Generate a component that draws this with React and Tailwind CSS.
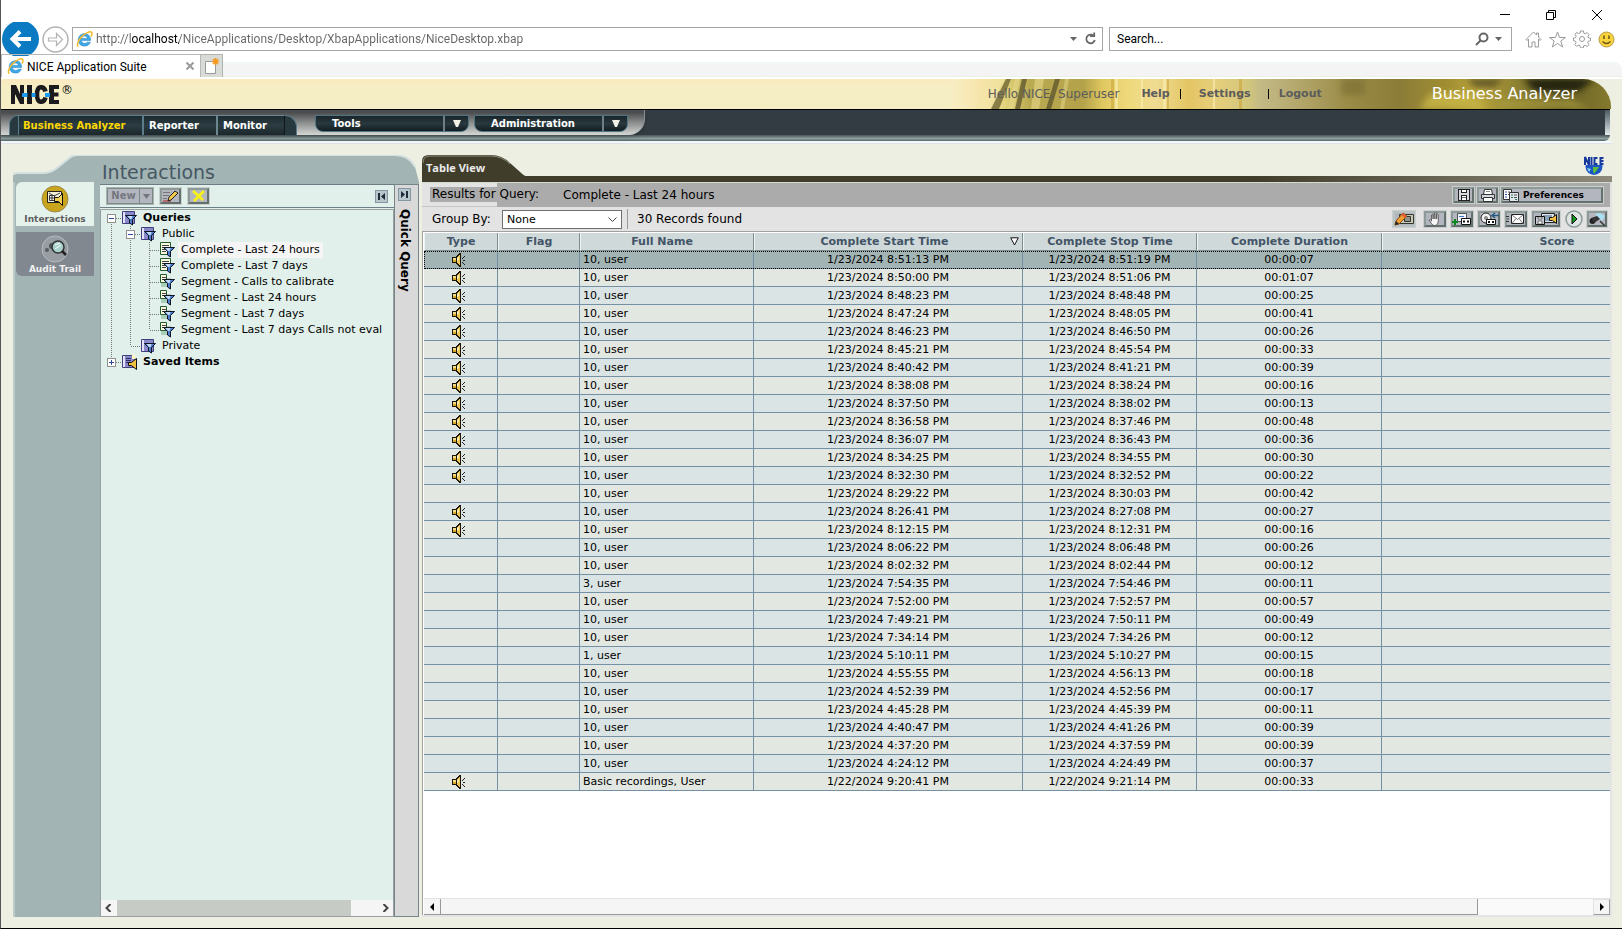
import React, { useState } from "react";

const records = [
  [1, "10, user", "1/23/2024 8:51:13 PM", "1/23/2024 8:51:19 PM", "00:00:07"],
  [1, "10, user", "1/23/2024 8:50:00 PM", "1/23/2024 8:51:06 PM", "00:01:07"],
  [1, "10, user", "1/23/2024 8:48:23 PM", "1/23/2024 8:48:48 PM", "00:00:25"],
  [1, "10, user", "1/23/2024 8:47:24 PM", "1/23/2024 8:48:05 PM", "00:00:41"],
  [1, "10, user", "1/23/2024 8:46:23 PM", "1/23/2024 8:46:50 PM", "00:00:26"],
  [1, "10, user", "1/23/2024 8:45:21 PM", "1/23/2024 8:45:54 PM", "00:00:33"],
  [1, "10, user", "1/23/2024 8:40:42 PM", "1/23/2024 8:41:21 PM", "00:00:39"],
  [1, "10, user", "1/23/2024 8:38:08 PM", "1/23/2024 8:38:24 PM", "00:00:16"],
  [1, "10, user", "1/23/2024 8:37:50 PM", "1/23/2024 8:38:02 PM", "00:00:13"],
  [1, "10, user", "1/23/2024 8:36:58 PM", "1/23/2024 8:37:46 PM", "00:00:48"],
  [1, "10, user", "1/23/2024 8:36:07 PM", "1/23/2024 8:36:43 PM", "00:00:36"],
  [1, "10, user", "1/23/2024 8:34:25 PM", "1/23/2024 8:34:55 PM", "00:00:30"],
  [1, "10, user", "1/23/2024 8:32:30 PM", "1/23/2024 8:32:52 PM", "00:00:22"],
  [0, "10, user", "1/23/2024 8:29:22 PM", "1/23/2024 8:30:03 PM", "00:00:42"],
  [1, "10, user", "1/23/2024 8:26:41 PM", "1/23/2024 8:27:08 PM", "00:00:27"],
  [1, "10, user", "1/23/2024 8:12:15 PM", "1/23/2024 8:12:31 PM", "00:00:16"],
  [0, "10, user", "1/23/2024 8:06:22 PM", "1/23/2024 8:06:48 PM", "00:00:26"],
  [0, "10, user", "1/23/2024 8:02:32 PM", "1/23/2024 8:02:44 PM", "00:00:12"],
  [0, "3, user", "1/23/2024 7:54:35 PM", "1/23/2024 7:54:46 PM", "00:00:11"],
  [0, "10, user", "1/23/2024 7:52:00 PM", "1/23/2024 7:52:57 PM", "00:00:57"],
  [0, "10, user", "1/23/2024 7:49:21 PM", "1/23/2024 7:50:11 PM", "00:00:49"],
  [0, "10, user", "1/23/2024 7:34:14 PM", "1/23/2024 7:34:26 PM", "00:00:12"],
  [0, "1, user", "1/23/2024 5:10:11 PM", "1/23/2024 5:10:27 PM", "00:00:15"],
  [0, "10, user", "1/23/2024 4:55:55 PM", "1/23/2024 4:56:13 PM", "00:00:18"],
  [0, "10, user", "1/23/2024 4:52:39 PM", "1/23/2024 4:52:56 PM", "00:00:17"],
  [0, "10, user", "1/23/2024 4:45:28 PM", "1/23/2024 4:45:39 PM", "00:00:11"],
  [0, "10, user", "1/23/2024 4:40:47 PM", "1/23/2024 4:41:26 PM", "00:00:39"],
  [0, "10, user", "1/23/2024 4:37:20 PM", "1/23/2024 4:37:59 PM", "00:00:39"],
  [0, "10, user", "1/23/2024 4:24:12 PM", "1/23/2024 4:24:49 PM", "00:00:37"],
  [
    1,
    "Basic recordings, User",
    "1/22/2024 9:20:41 PM",
    "1/22/2024 9:21:14 PM",
    "00:00:33",
  ],
];

// guides: what each 19px indent cell draws
const tree = [
  { guides: ["minus-first"], icon: "folder", label: "Queries", bold: true },
  { guides: ["line", "minus"], icon: "folder", label: "Public" },
  { guides: ["line", "line", "tee"], icon: "complete", label: "Complete - Last 24 hours" },
  { guides: ["line", "line", "tee"], icon: "complete", label: "Complete - Last 7 days" },
  { guides: ["line", "line", "tee"], icon: "segment", label: "Segment - Calls to calibrate" },
  { guides: ["line", "line", "tee"], icon: "segment", label: "Segment - Last 24 hours" },
  { guides: ["line", "line", "tee"], icon: "segment", label: "Segment - Last 7 days" },
  { guides: ["line", "line", "end"], icon: "segment", label: "Segment - Last 7 days Calls not eval" },
  { guides: ["line", "end"], icon: "folder", label: "Private" },
  { guides: ["plus"], icon: "saved", label: "Saved Items", bold: true },
];

/* ---------- icons ---------- */

const IeLogo = () => (
  <svg width="17" height="17" viewBox="0 0 17 17" className="shrink-0">
    <path
      d="M14.6 9.6H5.4c.2 1.8 1.5 2.8 3.2 2.8 1.2 0 2-.4 2.6-1.2h3.2c-.8 2.4-3 3.9-5.8 3.9-3.8 0-6.4-2.5-6.4-6.2 0-3.6 2.6-6.2 6.3-6.2 3.8 0 6.2 2.6 6.1 6.900zM5.5 7.400h5.900c-.2-1.500-1.300-2.400-2.900-2.400s-2.700.9-3 2.400z"
      fill="#3fa9e6"
      stroke="#1c7fc4"
      strokeWidth=".5"
    />
    <path
      d="M2.300 15.600C.2 14.300 2.200 9.200 6 5.400 9.900 1.500 14.500-.2 15.700 1.600c.6.900.2 2.500-.7 4"
      fill="none"
      stroke="#f2b92c"
      strokeWidth="1.500"
    />
  </svg>
);

const Speaker = () => (
  <svg width="14" height="14" viewBox="0 0 14 14" shapeRendering="crispEdges" className="mx-auto block">
    <path d="M0 4h4v-1h1v-1h1v-1h1v-1h2v14h-2v-1h-1v-1h-1v-1h-1v-1h-4z" fill="#1a1608" />
    <path d="M1 5h3v4h-3z" fill="#d9a92c" />
    <path d="M1 5h3v2h-3z" fill="#f7dc84" />
    <path d="M5 4h1v-1h1v-1h1v10h-1v-1h-1v-1h-1z" fill="#efc452" />
    <path d="M5 5h1v3h-1zM6 4h1v3h-1z" fill="#fdeeb4" />
    <path d="M10 5h1v-1h1v-1h1v1h-1v1h-1v1h-1zM11 7h2v1h-2zM10 9h1v1h1v1h1v1h-1v-1h-1v-1h-1z" fill="#222" />
  </svg>
);

const Funnel = () => (
  <>
    <path d="M4.500 5.500h11l-4 4v5.500l-3-2v-3.500z" fill="#4f7dc9" stroke="#0d1426" />
    <path d="M6.500 6h5l-1 3h-1.500z" fill="#c6dcf8" />
  </>
);

const TreeIcon = ({ type }) => (
  <svg width="17" height="16" viewBox="0 0 17 16" className="shrink-0">
    {(type === "folder" || type === "saved") && (
      <>
        <path d="M1.500 1.500h12v12h-12z" fill="#8989c9" stroke="#40407c" />
        <path d="M2 2h2v11h-2z" fill="#e4e4f6" />
      </>
    )}
    {type === "complete" && (
      <>
        <path d="M1.500.500h10v12h-10z" fill="#fbf9e0" stroke="#215c2b" />
        <path d="M3 3.500h7M3 5.500h6M3 7.500h5M3 9.500h4" stroke="#444" />
      </>
    )}
    {type === "segment" && (
      <>
        <path d="M2 4h10v9h-10z" fill="#a9ceb7" />
        <path d="M1.500.500h6v8h-6z" fill="#fbf9e0" stroke="#215c2b" />
        <path d="M3 3.500h4M3 5.500h3" stroke="#444" />
      </>
    )}
    {type === "saved" ? (
      <>
        <path d="M5 4.500h5M5 6.500h5M5 8.500h3" stroke="#2b2b60" />
        <path d="M7.500 8.500h3l5-4v11l-5-4h-3z" fill="#f0c341" stroke="#111" />
        <path d="M11 1h3v4h-3z" fill="#fff6c0" />
      </>
    ) : (
      <Funnel />
    )}
  </svg>
);

const Guide = ({ kind }) => {
  const dots = { stroke: "#777", strokeDasharray: "1 1" };
  const boxed = kind === "minus" || kind === "plus" || kind === "minus-first";
  return (
    <svg width="19" height="16" viewBox="0 0 19 16" shapeRendering="crispEdges" className="shrink-0">
      {kind !== "minus-first" && <path d="M9.500 0v8" {...dots} />}
      {(kind === "line" || kind === "tee" || kind === "minus" || kind === "minus-first") && (
        <path d="M9.500 8v8" {...dots} />
      )}
      {kind !== "line" && <path d="M10 8.500h9" {...dots} />}
      {boxed && (
        <>
          <path d="M5.500 4.500h8v8h-8z" fill="#fff" stroke="#8f8f8f" />
          <path d="M7 8.500h5" stroke="#2b4a9b" />
        </>
      )}
      {kind === "plus" && <path d="M9.500 6v5" stroke="#2b4a9b" />}
    </svg>
  );
};

const BannerArt = () => (
  <svg
    viewBox="0 0 660 30"
    preserveAspectRatio="none"
    className="absolute right-0 top-0 h-full w-[660px]"
    aria-hidden="true"
  >
    <defs>
      <linearGradient id="art">
        <stop offset="0" stopColor="#f8eec4" />
        <stop offset=".05" stopColor="#f6e3a8" />
        <stop offset=".08" stopColor="#e3d57c" />
        <stop offset=".12" stopColor="#b9a950" />
        <stop offset=".2" stopColor="#b3a24a" />
        <stop offset=".23" stopColor="#e0c860" />
        <stop offset=".27" stopColor="#efd97c" />
        <stop offset=".31" stopColor="#efdb92" />
        <stop offset=".36" stopColor="#e4c564" />
        <stop offset=".4" stopColor="#e6cf7c" />
        <stop offset=".45" stopColor="#d3c67c" />
        <stop offset=".47" stopColor="#c3b985" />
        <stop offset=".52" stopColor="#b5a96e" />
        <stop offset=".6" stopColor="#9b8c48" />
        <stop offset=".68" stopColor="#8b7d38" />
        <stop offset=".75" stopColor="#a08d31" />
        <stop offset=".8" stopColor="#b8a43c" />
        <stop offset=".86" stopColor="#8b7f32" />
        <stop offset=".92" stopColor="#665d24" />
        <stop offset="1" stopColor="#857a2e" />
      </linearGradient>
      <filter id="soft">
        <feGaussianBlur stdDeviation="3" />
      </filter>
    </defs>
    <path d="M0 0h660v30h-660z" fill="url(#art)" />
    <path d="M36 0h18l-16 30h-14z" fill="#f3e6a8" opacity=".7" />
    <path d="M55 0h5l-12 30h-8z" fill="#6f6636" opacity=".8" />
    <path d="M71 0h5l-7 30h-5zM104 0h5l-9 30h-5z" fill="#5b532c" opacity=".75" />
    <path d="M64 0h5l-6 30h-6zM84 0h9l-5 30h-8z" fill="#e6d98a" opacity=".6" />
    <path d="M114 0h4l-5 30h-4z" fill="#e6d98a" opacity=".5" />
    <path d="M164 0h3v30h-3zM190 0h2v30h-2zM212 0h3v30h-3zM262 0h2v30h-2z" fill="#f8ecae" opacity=".7" />
    <path d="M160 0h3v30h-3zM216 0h2v30h-2zM288 0h3v30h-3z" fill="#c9a53c" opacity=".6" />
    <g filter="url(#soft)">
      <path d="M516 0h36l-8 8h-20z" fill="#5e5526" />
      <path d="M572 0h72l-16 12h-44z" fill="#24210a" />
      <path d="M480 14h40l14 16h-66z" fill="#c9b848" opacity=".8" />
      <path d="M552 20h68l20 10h-98z" fill="#a69a3c" opacity=".7" />
      <path d="M390 0h24v16h-24z" fill="#6f6629" opacity=".5" />
    </g>
  </svg>
);

const SaveIcon = () => (
  <svg width="12" height="12" viewBox="0 0 12 12" shapeRendering="crispEdges">
    <path d="M0 0h12v12h-12z" fill="#222" />
    <path d="M1 1h10v10h-10z" fill="#d8dadf" />
    <path d="M3 0h6v4h-6zM3 6h6v6h-6z" fill="#222" />
    <path d="M4 1h4v2h-4zM4 7h4v4h-4z" fill="#fff" />
    <path d="M4 8h4v1h-4z" fill="#666" />
  </svg>
);

const PrintIcon = () => (
  <svg width="14" height="13" viewBox="0 0 14 13">
    <path d="M3.500.500h7l1 5h-9z" fill="#fff" stroke="#333" />
    <path d="M.500 5.500h13v4h-13z" fill="#d6d8dd" stroke="#333" />
    <path d="M2.500 8.500h9v4h-9z" fill="#fff" stroke="#333" />
    <path d="M5 2.500h4" stroke="#888" />
  </svg>
);

const PrefIcon = () => (
  <svg width="17" height="13" viewBox="0 0 17 13" className="shrink-0">
    <path d="M.500.500h8v10h-8z" fill="#fff" stroke="#333" />
    <path d="M2 3h2M2 5.500h2M2 8h2" stroke="#2b4ab0" />
    <path d="M5 3h2M5 5.500h2" stroke="#555" />
    <path d="M6.500 3.500h9v9h-9z" fill="#e2e6ec" stroke="#333" />
    <path d="M8 6h2M8 8.500h2M12 10.500h2" stroke="#2b7a4a" />
    <path d="M11 6h3M11 8.500h3" stroke="#555" />
  </svg>
);

const tools = [
  {
    name: "Edit recording",
    pale: true,
    art: (
      <>
        <path d="M5.500 2.500h14v9h-14z" fill="#c9ccb4" stroke="#333" />
        <path d="M10.500 4.500h6v5h-6z" fill="#8f9488" stroke="#333" />
        <path d="M1 13l1-4 7-8 4 3-8 8z" fill="#f0a030" stroke="#8a4a10" />
        <path d="M9 1l4 3-2 2-4-3z" fill="#e0603a" />
        <path d="M1 13l1-4 3 3z" fill="#222" />
      </>
    ),
  },
  {
    name: "Stop",
    art: (
      <path
        d="M6.500 8V3q.8-1 1.600 0v4-5q.9-1 1.800 0v5V1q.9-1 1.800 0v6V2.500q.8-1 1.600 0V9q0 4-3 4.500H9q-1.500 0-2.500-2L4 8q1-1.200 2.500 1z"
        fill="#f6f6f6"
        stroke="#4a4a4a"
        strokeWidth=".8"
      />
    ),
  },
  {
    name: "Add to package",
    art: (
      <>
        <path d="M5.500 1.500h9v8h-9z" fill="#eef4fb" stroke="#555" />
        <path d="M7 4.500h5" stroke="#4a78c0" />
        <path d="M9.500 6.500h9v6h-9z" fill="#fff" stroke="#111" />
        <path d="M11 8.500h2v2h-2zM15 8.500h2v2h-2z" fill="#111" />
        <path d="M0 10h6M3 7v6" stroke="#0b8a1c" strokeWidth="2" />
      </>
    ),
  },
  {
    name: "Restore from media",
    art: (
      <>
        <circle cx="7" cy="6" r="5" fill="#f2f2f2" stroke="#222" />
        <circle cx="7" cy="6" r="1.500" fill="#aaa" stroke="#444" strokeWidth=".6" />
        <path d="M7.500 7.500h9v5h-9z" fill="#fff" stroke="#111" />
        <path d="M9 9h2v2h-2zM13 9h2v2h-2z" fill="#111" />
        <path d="M20 3.500h-6M16 1l-3 2.500 3 2.500" fill="none" stroke="#225c86" strokeWidth="1.500" />
      </>
    ),
  },
  {
    name: "Send mail",
    art: (
      <>
        <path d="M5.500 2.500h12v9h-12z" fill="#fff" stroke="#222" />
        <path d="M6 3l5.500 4.500L17 3M6 11.500l4-5M17 11.500l-4-5" fill="none" stroke="#555" strokeWidth=".8" />
        <path d="M0 4.500h3M1 7h2M0 9.500h3" stroke="#333" />
      </>
    ),
  },
  {
    name: "Save recording",
    wide: true,
    art: (
      <>
        <path d="M7.500 1.500h13v9h-13z" fill="#dfe6ee" stroke="#222" />
        <path d="M9 3h9v6h-9z" fill="#89a2b6" />
        <path d="M1.500 4.500h9v8h-9z" fill="#c9ccd4" stroke="#111" />
        <path d="M4 5h4v2h-4zM4 9h4v3h-4z" fill="#fff" stroke="#222" strokeWidth=".6" />
        <path d="M15.500 5.500h3l4-3v9l-4-3h-3z" fill="#f0c341" stroke="#111" />
      </>
    ),
  },
];

/* ---------- small parts ---------- */

const ToolButton = ({ label, className = "", children }) => (
  <button
    type="button"
    aria-label={label}
    className={`flex shrink-0 items-center justify-center border-2 border-t-[#8d9a98] border-l-[#8d9a98] border-r-[#64706e] border-b-[#64706e] bg-[#b4b6bf] outline outline-[#c9cfcd] ${className}`}
  >
    {children}
  </button>
);

const MenuButton = ({ label, className }) => (
  <div
    className={`flex h-[17px] rounded-b-lg border border-[#4e7383] bg-linear-to-b from-[#1a2529] via-[#28393f] to-[#141e22] text-[10px] text-white ${className}`}
  >
    <button type="button" className="flex-1 border-r-2 border-[#6d7f85] pl-4 text-left leading-[14px] font-bold">
      {label}
    </button>
    <button type="button" aria-label={`Open ${label}`} className="flex w-[23px] items-center justify-center">
      <svg width="8" height="7" viewBox="0 0 8 7">
        <path d="M0 0h8l-3 7h-2z" fill="#f2f2e6" />
      </svg>
    </button>
  </div>
);

/* ---------- browser chrome ---------- */

const BrowserChrome = () => (
  <div className="bg-white font-[Roboto,sans-serif] text-xs">
    <div className="flex h-[27px] items-center justify-end gap-[34px] pt-[2px] pr-[19px]">
      <button type="button" aria-label="Minimize">
        <svg width="12" height="12" viewBox="0 0 12 12"><path d="M1 5.500h10" stroke="#000" /></svg>
      </button>
      <button type="button" aria-label="Restore">
        <svg width="12" height="12" viewBox="0 0 12 12" fill="none" stroke="#000">
          <path d="M1.500 3.500h7v7h-7zM3.500 3.500v-2h7v7h-2" />
        </svg>
      </button>
      <button type="button" aria-label="Close">
        <svg width="12" height="12" viewBox="0 0 12 12"><path d="M1 1l10 10M11 1l-10 10" stroke="#000" /></svg>
      </button>
    </div>

    <div className="flex h-[24px] items-center pr-[7px]">
      <button type="button" aria-label="Back" className="-my-2 ml-[1px] shrink-0">
        <svg width="37" height="34" viewBox="0 0 37 34">
          <circle cx="18.500" cy="17" r="18.500" fill="#0a7bc2" />
          <path d="M29 17H11M18 9.500L10.500 17l7.500 7.500" fill="none" stroke="#fff" strokeWidth="4" />
        </svg>
      </button>
      <button type="button" aria-label="Forward" className="-my-1 ml-[3px] shrink-0">
        <svg width="27" height="27" viewBox="0 0 27 27" fill="none" stroke="#b4b4b4">
          <circle cx="13.500" cy="13.500" r="12.500" strokeWidth="1.500" />
          <path d="M6.500 12h8V7.500l6 6-6 6V15h-8z" strokeWidth="1.200" />
        </svg>
      </button>
      <div className="ml-[3px] flex h-6 flex-1 items-center gap-[3px] border border-[#a6a6a6] px-[3px]">
        <IeLogo />
        <input
          type="text"
          aria-label="Address"
          defaultValue="http://localhost/NiceApplications/Desktop/XbapApplications/NiceDesktop.xbap"
          className="h-5 min-w-0 flex-1 bg-[linear-gradient(to_right,#666_36px,#000_36px,#000_83px,#666_83px)] bg-clip-text text-transparent outline-none"
        />
        <button type="button" aria-label="Show history">
          <svg width="7" height="4" viewBox="0 0 7 4"><path d="M0 0h7l-3.500 4z" fill="#666" /></svg>
        </button>
        <button type="button" aria-label="Refresh" className="mr-[2px] ml-[4px]">
          <svg width="13" height="14" viewBox="0 0 13 14" fill="none" stroke="#666" strokeWidth="1.800">
            <path d="M9.500 3.800A4.300 4.300 0 1 0 10.800 8" />
            <path d="M6 4.200h4.200V.500" />
          </svg>
        </button>
      </div>
      <div className="ml-[6px] flex h-6 w-[403px] items-center border border-[#a6a6a6] px-[7px]">
        <input
          type="text"
          aria-label="Search"
          placeholder="Search..."
          className="h-5 min-w-0 flex-1 outline-none placeholder:text-black"
        />
        <button type="button" aria-label="Go" className="mr-[6px]">
          <svg width="14" height="14" viewBox="0 0 14 14" fill="none" stroke="#666" strokeWidth="2">
            <circle cx="8.500" cy="5.500" r="4" />
            <path d="M5.500 8.500L1 13" />
          </svg>
        </button>
        <button type="button" aria-label="Search providers" className="mr-[2px]">
          <svg width="7" height="4" viewBox="0 0 7 4"><path d="M0 0h7l-3.500 4z" fill="#666" /></svg>
        </button>
      </div>
      <div className="ml-[13px] flex shrink-0 items-center gap-[7px]">
        <button type="button" aria-label="Home">
          <svg width="17" height="17" viewBox="0 0 17 17" fill="none" stroke="#9a9a9a">
            <path d="M1 8.500L8.500 1l3 3V2h2v4l2.500 2.500-1 1-1.500-1.500v8h-3.500v-5h-3v5H3.500V8L2 9.500z" />
          </svg>
        </button>
        <button type="button" aria-label="Favorites">
          <svg width="17" height="17" viewBox="0 0 17 17" fill="none" stroke="#9a9a9a">
            <path d="M8.500 1l2 5.500h6L11.800 10l1.800 6-5.100-3.600L3.400 16l1.800-6L.500 6.500h6z" />
          </svg>
        </button>
        <button type="button" aria-label="Tools">
          <svg width="18" height="18" viewBox="0 0 18 18" fill="none" stroke="#9a9a9a">
            <circle cx="9" cy="9" r="2.500" />
            <path d="M7.500 1h3l.3 2.200 1.500.6 1.800-1.300 2 2.100-1.300 1.800.7 1.500 2 .3v2.600l-2.200.4-.6 1.500 1.300 1.900-2 1.900-1.900-1.200-1.500.6-.3 2h-2.900l-.4-2.200-1.400-.6-1.900 1.300L1.800 14.500l1.300-1.800-.6-1.500L.500 10.800V8l2-.3.700-1.500-1.300-1.900 2-1.900 1.800 1.200 1.500-.600z" />
          </svg>
        </button>
        <button type="button" aria-label="Feedback">
          <svg width="17" height="17" viewBox="0 0 17 17">
            <circle cx="8.500" cy="8.500" r="7.500" fill="#f8d33c" stroke="#b59a4a" />
            <path d="M6 4.500v3.500M11 4.500v3.500" stroke="#6b5414" strokeWidth="1.500" />
            <path d="M4.500 10.500q4 4 8 0" fill="none" stroke="#6b5414" strokeWidth="1.200" />
          </svg>
        </button>
      </div>
    </div>

    <div className="mt-[3px] flex h-[23px]">
      <div className="flex w-[200px] items-center gap-[3px] border-t border-r border-l border-[#b8b8b8] pl-[5px]">
        <IeLogo />
        <span className="flex-1 pt-[2px]">NICE Application Suite</span>
        <button type="button" aria-label="Close tab" className="mr-[6px]">
          <svg width="8" height="8" viewBox="0 0 8 8"><path d="M.500.500l7 7M7.500.500l-7 7" stroke="#999" strokeWidth="2" /></svg>
        </button>
      </div>
      <button
        type="button"
        aria-label="New tab"
        className="flex w-[22px] items-center justify-center border-t border-r border-[#b0b4ae] bg-[#d9dcd6]"
      >
        <svg width="16" height="17" viewBox="0 0 16 17">
          <path d="M1.500 3.500h10v12h-10z" fill="#fff" stroke="#999" />
          <path d="M11.500 0v7M8 3.500h7M9 1l5 5M14 1l-5 5" stroke="#f39a1e" strokeWidth="1.500" />
        </svg>
      </button>
      <div className="mt-2 flex-1 rounded-tr-lg border-b border-[#ebefe8] bg-linear-to-b from-[#f2f7f4] from-10% to-[#f4f4f4] to-40%" />
    </div>
  </div>
);

/* ---------- application header ---------- */

const Header = () => (
  <header className="border-t-2 border-white">
    <div className="relative mr-[11px] flex h-[30px] items-center overflow-hidden rounded-tr-[28px] bg-linear-to-b from-[#fbeac0] from-5% to-[#f5eec5] to-30% pr-[34px]">
      <BannerArt />
      <div className="flex flex-1 items-start pl-[10px]">
        <svg width="48" height="19" viewBox="0 0 48 19" role="img" aria-label="NICE">
          <g fill="#1c1a1c">
            <path d="M0 0h5l4 9V0h4v19H9L4 9v10H0z" />
            <path d="M16 0h5v19h-5z" />
            <path d="M38 0h10v4h-5v3.500h4.500v4H43V15h5v4H38z" />
          </g>
          <path
            d="M34.500 6.500Q33.500 2.200 30 2.200 26 2.200 26 9.500t4 7.300q3.500 0 4.500-4.300"
            fill="none"
            stroke="#1c1a1c"
            strokeWidth="4.500"
          />
          <path d="M11 8h5.500v4H11zM20.500 8h4v4h-4zM34 8h5v4h-5z" fill="#1b9af0" />
        </svg>
        <span className="ml-[2px] text-xs leading-[11px]">®</span>
      </div>
      <div className="relative flex items-center text-[#5c5c5c]">
        <span className="text-xs">Hello NICE, Superuser</span>
        <a href="#help" className="ml-[22px] font-bold">Help</a>
        <span className="ml-[10px] h-[10px] w-px bg-black" />
        <a href="#settings" className="ml-[18px] font-bold">Settings</a>
        <span className="ml-[17px] h-[10px] w-px bg-black" />
        <a href="#logout" className="ml-[10px] font-bold">Logout</a>
        <h1 className="ml-[110px] text-base text-white">Business Analyzer</h1>
      </div>
    </div>

    <nav className="mr-[12px] rounded-br-xl bg-[#333c42]">
      <div className="flex h-[26px] border-t border-black">
        <div className="flex rounded-br-2xl border-r border-[#8a9194] bg-linear-to-b from-[#4b4d4f] from-10% via-[#8a8d8d] via-50% to-[#d4d7d3] pr-[16px] pl-2 shadow-md">
          <div className="mt-[5px] flex h-5 text-[10px] text-white">
            <span className="w-[9px] rounded-tl-xl border-t border-l border-[#5b7c8c] bg-[#27383e]" />
            <button type="button" className="w-[126px] border-t border-r-2 border-l border-[#5b7c8c] bg-linear-to-b from-[#1d2b30] via-[#2b3c42] to-[#1b272b] pl-[4px] text-left font-bold text-[#ffd800]">
              Business Analyzer
            </button>
            <button type="button" className="w-[74px] border-t border-r-2 border-[#6d8791] bg-linear-to-b from-[#1d2b30] via-[#2b3c42] to-[#1b272b] pl-[5px] text-left font-bold">
              Reporter
            </button>
            <button type="button" className="w-[67px] border-t border-r border-[#6d8791] border-r-[#101719] bg-linear-to-b from-[#1d2b30] via-[#2b3c42] to-[#1b272b] pl-[5px] text-left font-bold">
              Monitor
            </button>
            <span className="w-[12px] rounded-tr-xl border-t border-r border-[#5b7c8c] bg-[#27383e]" />
          </div>
          <MenuButton label="Tools" className="mt-[5px] ml-[18px] w-[154px]" />
          <MenuButton label="Administration" className="mt-[5px] ml-[5px] w-[154px]" />
        </div>
        <div className="flex-1" />
        <div className="w-[5px] bg-linear-to-b from-[#4d5b60] to-[#e2ebee]" />
      </div>
      <div className="h-[6px] rounded-br-xl bg-linear-to-b from-[#4a5557] via-[#8fa0a0] via-60% to-[#56656a]" />
    </nav>
    <div className="mr-[10px] h-[3px] border-b border-[#dfe3e6] bg-[#f3f8fa]" />
  </header>
);

/* ---------- left panel ---------- */

const SidePanel = () => {
  const [selected, setSelected] = useState(2);

  return (
    <aside className="flex w-[406px] shrink-0 flex-col">
      <div className="relative h-[27px] pl-[89px]">
        <svg width="406" height="27" viewBox="0 0 406 27" className="absolute inset-0">
          <path d="M0 27v-7q0-2 3-2h26q9 0 15-5l11-9q4-4 10-4h316q15 0 21 12l4 15z" fill="#a3b4b4" />
          <path d="M1 20q0-2 3-2h25q9 0 15-5l11-9q4-4 10-4h316q15 0 21 12" fill="none" stroke="#d5e0e0" strokeWidth="2" />
        </svg>
        <h2 className="relative pt-[6px] text-[19px] leading-[23px] text-[#465764]">Interactions</h2>
      </div>

      <div className="flex flex-1 bg-[#a3b4b4]">
        <div className="w-[87px] border-l-2 border-[#bccaca] pr-[6px] pl-[1px]">
          <button
            type="button"
            className="flex h-11 w-full flex-col items-center rounded-tl-md bg-[#e5f2ec] pt-[3px] font-bold text-[#5e5e5e]"
          >
            <svg width="28" height="28" viewBox="0 0 28 28" className="shrink-0">
              <circle cx="14" cy="14" r="13" fill="#c9a51e" stroke="#9a8a4c" />
              <path d="M6.500 6.500h14v11h-14z" fill="#f3efd8" stroke="#222" />
              <path d="M8 8l5 3 6-3M9 14h6" fill="none" stroke="#444" />
              <path d="M8.500 10.500h5v5h-5zM11 11v4M9 13h4" fill="#fff" stroke="#333" />
              <path d="M13.500 12.500h4l4-4v12l-4-4h-4z" fill="#f2cf55" stroke="#111" />
            </svg>
            <span className="text-[9px] leading-[13px]">Interactions</span>
          </button>
          <button
            type="button"
            className="mt-[6px] flex h-11 w-full flex-col items-center rounded-bl-md bg-[#828890] pt-[3px] font-bold text-[#f0f0f0]"
          >
            <svg width="28" height="28" viewBox="0 0 28 28" className="shrink-0">
              <circle cx="14" cy="14" r="13" fill="#979da3" stroke="#b6bcc0" />
              <circle cx="6" cy="15" r="2" fill="#555d63" />
              <circle cx="11" cy="11" r="3" fill="#4d555b" />
              <circle cx="17" cy="12" r="6" fill="#a8d0cc" stroke="#333" strokeWidth="1.500" />
              <path d="M14 10l5-2M14 14l6-4" stroke="#fff" />
              <path d="M21 16l4 4" stroke="#222" strokeWidth="2.500" />
            </svg>
            <span className="text-[9px] leading-[13px]">Audit Trail</span>
          </button>
        </div>

        <div className="mt-[2px] flex w-[294px] flex-col border-t border-[#6c7c80] bg-[#e1f0ea]">
          <div className="flex h-[23px] items-center border-b border-[#6c8088] pr-[6px] pl-[7px]">
            <div className="flex h-4 border border-[#7b8987] bg-[#b4b6bf] outline outline-[#a7b3b0]">
              <button type="button" className="w-[31px] text-[10px] leading-[14px] font-bold text-[#75777e]">
                New
              </button>
              <button
                type="button"
                aria-label="New menu"
                className="flex w-[13px] items-center justify-center border-l border-[#7b8987]"
              >
                <svg width="7" height="5" viewBox="0 0 7 5"><path d="M0 0h7l-3.500 5z" fill="#75777e" /></svg>
              </button>
            </div>
            <ToolButton label="Edit" className="ml-[7px] h-4 w-[21px]">
              <svg width="17" height="12" viewBox="0 0 17 12">
                <path d="M1 2.500h7M1 5.500h6M1 8.500h4" stroke="#777" />
                <path d="M1 11h8" stroke="#c02020" />
                <path d="M6 11l1-4 6-6 3 2-7 7z" fill="#f1c94a" stroke="#222" />
              </svg>
            </ToolButton>
            <ToolButton label="Delete" className="ml-[7px] h-4 w-[21px]">
              <svg width="13" height="12" viewBox="0 0 13 12">
                <path d="M1 1l10 9M12 1L2 11" stroke="#f5ef1c" strokeWidth="3" />
              </svg>
            </ToolButton>
            <button
              type="button"
              aria-label="Collapse panel"
              className="ml-auto flex h-[13px] w-[13px] items-center justify-center border border-[#8496a2] bg-[#b9c6cc]"
            >
              <svg width="7" height="7" viewBox="0 0 7 7"><path d="M0 0h2v7h-2zM7 0v7l-4-3.500z" fill="#1f2b38" /></svg>
            </button>
          </div>

          <div className="mt-[1px] flex min-h-0 flex-1 flex-col overflow-hidden border border-[#999f9f]">
            <ul className="flex-1 pl-[1px]">
              {tree.map((node, i) => (
                <li key={node.label} className="flex h-4 items-center">
                  {node.guides.map((kind, j) => (
                    <Guide key={j} kind={kind} />
                  ))}
                  <TreeIcon type={node.icon} />
                  <button
                    type="button"
                    onClick={() => setSelected(i)}
                    className={`ml-[2px] px-[3px] leading-4 whitespace-nowrap ${node.bold ? "font-bold" : ""} ${
                      selected === i ? "bg-[#f5f5f5]" : ""
                    }`}
                  >
                    {node.label}
                  </button>
                </li>
              ))}
            </ul>
            <div className="flex h-4 items-center bg-[#f5f5f5]">
              <button type="button" aria-label="Scroll left" className="flex w-4 pl-1">
                <svg width="7" height="8" viewBox="0 0 7 8"><path d="M5.500 0L1.500 4l4 4" fill="none" stroke="#444" strokeWidth="2" /></svg>
              </button>
              <div className="flex h-full flex-1">
                <div className="h-full w-[90%] bg-[#c6cbc5]" />
              </div>
              <button type="button" aria-label="Scroll right" className="flex w-4 justify-center">
                <svg width="7" height="8" viewBox="0 0 7 8"><path d="M1.500 0l4 4-4 4" fill="none" stroke="#444" strokeWidth="2" /></svg>
              </button>
            </div>
          </div>
        </div>

        <div className="mt-[2px] flex flex-1 flex-col items-start border border-[#75858a] bg-[#d9d9d9] pt-[3px] pl-[3px]">
          <button
            type="button"
            aria-label="Expand quick query"
            className="flex h-[13px] w-[13px] items-center justify-center border border-[#8496a2] bg-[#b9c6cc]"
          >
            <svg width="7" height="7" viewBox="0 0 7 7"><path d="M5 0h2v7h-2zM0 0v7l4-3.500z" fill="#1f2b38" /></svg>
          </button>
          <span className="mt-[8px] text-xs leading-[14px] font-bold [writing-mode:vertical-rl]">Quick Query</span>
        </div>
      </div>
    </aside>
  );
};

/* ---------- results ---------- */

const headCell =
  "border-r border-b border-r-[#7d8c8c] border-b-[#7d8c8c] border-l border-l-[#eef3f3] bg-[#cfd9da] p-0 text-center font-bold text-[#425466]";
const cell = "h-[18px] border-r border-b border-[#7490a5] p-0 leading-[17px] whitespace-nowrap";

const RecordsTable = () => {
  const [active, setActive] = useState(0);

  return (
    <table className="w-[1308px] table-fixed border-separate border-spacing-0">
      <colgroup>
        <col className="w-[74px]" />
        <col className="w-[82px]" />
        <col className="w-[174px]" />
        <col className="w-[269px]" />
        <col className="w-[174px]" />
        <col className="w-[185px]" />
        <col />
      </colgroup>
      <thead>
        <tr className="h-[18px] leading-[17px]">
          <th className={headCell}>Type</th>
          <th className={headCell}>Flag</th>
          <th className={`${headCell} pr-[10px]`}>Full Name</th>
          <th className={headCell}>
            <div className="flex items-center pr-[3px]">
              <span className="flex-1 pl-1">Complete Start Time</span>
              <svg width="9" height="9" viewBox="0 0 9 9"><path d="M.700.800h7.600l-3.800 7.200z" fill="#fff" stroke="#111" /></svg>
            </div>
          </th>
          <th className={headCell}>Complete Stop Time</th>
          <th className={headCell}>Complete Duration</th>
          <th className={headCell}>Score</th>
        </tr>
      </thead>
      <tbody>
        {records.map(([voice, name, start, stop, duration], i) => (
          <tr
            key={start}
            onClick={() => setActive(i)}
            className={
              active === i
                ? "bg-[#a2b4b3] outline-1 -outline-offset-1 outline-dotted outline-black"
                : i % 2
                  ? "bg-[#e3e7e1]"
                  : "bg-[#dae4e5]"
            }
          >
            <td className={`${cell} pr-[3px]`}>{voice ? <Speaker /> : null}</td>
            <td className={cell} />
            <td className={`${cell} pl-[3px]`}>{name}</td>
            <td className={`${cell} text-center`}>{start}</td>
            <td className={`${cell} text-center`}>{stop}</td>
            <td className={`${cell} text-center`}>{duration}</td>
            <td className={cell} />
          </tr>
        ))}
      </tbody>
    </table>
  );
};

const ResultsPanel = () => (
  <main className="flex min-w-0 flex-1 flex-col">
    <div className="flex h-[21px] items-end">
      <div className="relative h-[21px] w-[104px] pl-[4px]">
        <svg width="104" height="21" viewBox="0 0 104 21" className="absolute inset-0">
          <path d="M0 21V6q0-6 7-6h62q11 0 19 8l9 8q5 5 7 5z" fill="#413d2b" />
          <path d="M1 8q0-7 7-7h61q11 0 19 8" fill="none" stroke="#8a8d79" />
        </svg>
        <span className="relative font-['Open_Sans',sans-serif] text-[11px] leading-[25px] font-bold text-[#ececec]">
          Table View
        </span>
      </div>
      <svg width="22" height="20" viewBox="0 0 22 20" className="mr-[7px] ml-auto" role="img" aria-label="NICE globe">
        <circle cx="11" cy="10.500" r="8.500" fill="#1d55c4" />
        <path d="M10 11h6l-2 3-3 4-1-3z" fill="#5bbf3a" />
        <path d="M4 12l4 1-2 3z" fill="#8bd8f0" />
        <path d="M0 0h22v9h-22z" fill="#ecefe2" />
        <path
          d="M2 9V1l4 8V1M8.500 1v8M14.500 2h-3v6h3M20.500 2h-3v6h3M17.500 5h3"
          fill="none"
          stroke="#173a9c"
          strokeWidth="2"
        />
      </svg>
    </div>
    <div className="h-[7px] border-b border-[#d5dbd2] bg-linear-to-r from-[#413d2b] from-70% to-[#8e8b7c]" />

    <div className="flex flex-1 flex-col border-r-2 border-b-2 border-[#e4e4e4] bg-white">
      <div className="flex h-6 items-center bg-[#ababab] pr-[7px] text-xs">
        <div className="flex h-6 w-[75px] items-center border-b border-[#c4c4c4] bg-[#e3e3e3] pl-2">
          <span className="-mr-1 bg-[#ababab] pl-[2px] leading-[15px] whitespace-nowrap">Results for Query:</span>
        </div>
        <span className="ml-[66px]">Complete - Last 24 hours</span>
        <div className="ml-auto flex items-center gap-[3px]">
          <ToolButton label="Save" className="h-4 w-[21px]"><SaveIcon /></ToolButton>
          <ToolButton label="Print" className="h-4 w-[21px]"><PrintIcon /></ToolButton>
          <ToolButton className="h-4 w-[102px] !justify-start gap-[3px] text-[9px] leading-3 font-bold">
            <PrefIcon />
            Preferences
          </ToolButton>
        </div>
      </div>

      <div className="flex h-[25px] items-center border-b border-[#a0a0a0] bg-[#e3e3e3] pr-[3px] pl-[10px] text-xs">
        <label htmlFor="group-by" className="w-[70px]">Group By:</label>
        <div className="relative">
          <select
            id="group-by"
            className="block h-[19px] w-[120px] appearance-none border border-[#6f6f6f] bg-white pl-1 text-[11px] leading-[15px] outline-none"
          >
            <option>None</option>
          </select>
          <svg width="9" height="6" viewBox="0 0 9 6" className="pointer-events-none absolute top-[7px] right-[5px]">
            <path d="M.500.500l4 4 4-4" fill="none" stroke="#444" />
          </svg>
        </div>
        <span className="ml-[5px] h-5 w-px bg-[#9a9a9a]" />
        <span className="ml-[9px]">30 Records found</span>
        <div className="ml-auto flex items-center">
          {tools.map((tool, i) => (
            <ToolButton
              key={tool.name}
              label={tool.name}
              className={`h-4 ${tool.wide ? "w-[28px]" : "w-[22px]"} ${i === 1 ? "ml-[9px]" : "ml-[5px]"} ${
                tool.pale ? "!border-[#b9c4c2]" : ""
              }`}
            >
              <svg
                width={tool.wide ? 24 : 20}
                height="14"
                viewBox={tool.wide ? "0 0 24 14" : "0 0 20 14"}
                className="shrink-0"
              >
                {tool.art}
              </svg>
            </ToolButton>
          ))}
          <button type="button" aria-label="Play" className="ml-[5px]">
            <svg width="18" height="18" viewBox="0 0 18 18">
              <circle cx="9" cy="9" r="8" fill="#dfe5e5" stroke="#8a9a98" strokeWidth="1.500" />
              <path d="M7 4l5 5-5 5z" fill="#0c9a1c" stroke="#111" />
            </svg>
          </button>
          <ToolButton label="Find" className="ml-[4px] h-4 w-[20px]">
            <svg width="17" height="13" viewBox="0 0 17 13" className="shrink-0">
              <path d="M6 1l5-1 5 3-3 5z" fill="#a9dff2" />
              <circle cx="3.500" cy="8" r="3" fill="#222" />
              <path d="M2 5l6-2 3 3-6 4z" fill="#333" />
              <path d="M11 8l5 5" stroke="#333" strokeWidth="1.500" />
            </svg>
          </ToolButton>
        </div>
      </div>

      <div className="flex flex-1 flex-col border-l border-[#a0a0a0] pt-px pl-px">
        <div className="min-w-0 flex-1 overflow-hidden">
          <RecordsTable />
        </div>
        <div className="flex h-[17px] border-t border-[#e3e3e3] bg-[#fafafa]">
          <button
            type="button"
            aria-label="Scroll table left"
            className="flex w-[17px] items-center justify-center border-r border-b border-[#999] bg-[#f5f5f5]"
          >
            <svg width="4" height="8" viewBox="0 0 4 8"><path d="M4 0v8l-4-4z" /></svg>
          </button>
          <div className="flex-1">
            <div className="h-full w-[90%] border-r border-b border-[#999] bg-[#f5f5f5]" />
          </div>
          <button
            type="button"
            aria-label="Scroll table right"
            className="flex w-[17px] items-center justify-center border border-[#999] border-t-[#e3e3e3] border-l-[#e3e3e3] bg-[#f5f5f5]"
          >
            <svg width="4" height="8" viewBox="0 0 4 8"><path d="M0 0v8l4-4z" /></svg>
          </button>
        </div>
      </div>
    </div>
  </main>
);

const App = () => (
  <div className="flex min-h-screen flex-col overflow-hidden border-b border-l border-[#555] border-b-black bg-[#ecefe2] font-['DejaVu_Sans',Verdana,sans-serif] text-[11px] text-black">
    <BrowserChrome />
    <Header />
    <div className="flex flex-1 gap-[3px] pt-[11px] pr-[10px] pb-[11px] pl-[12px]">
      <SidePanel />
      <ResultsPanel />
    </div>
  </div>
);

export default App;
